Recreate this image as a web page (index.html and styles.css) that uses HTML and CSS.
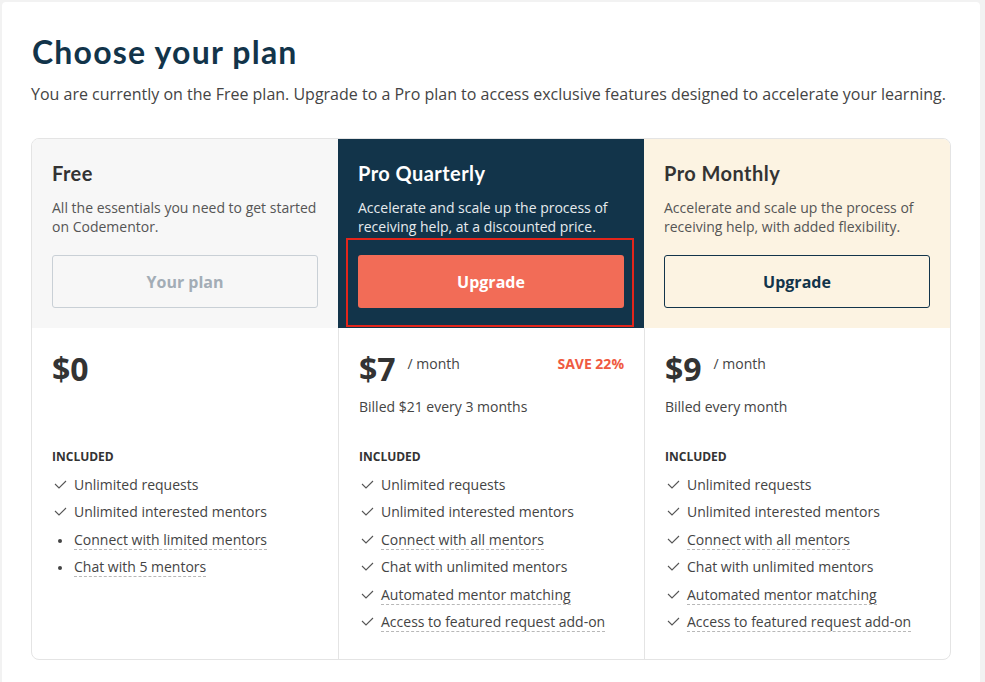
FILE: index.html
```html
<!DOCTYPE html>
<html lang="en">
<head>
    <meta charset="UTF-8">
    <meta name="viewport" content="width=device-width, initial-scale=1.0">
    <title>Choose your plan</title>
    <link rel="stylesheet" href="styles.css">
</head>
<body>
    <div class="panel">
        <h1>Choose your plan</h1>
        <p class="lead">You are currently on the Free plan. Upgrade to a Pro plan to access exclusive features designed to accelerate your learning.</p>

        <div class="plans">
            <!-- Free -->
            <div class="plan plan-free">
                <div class="plan-head">
                    <h2>Free</h2>
                    <p class="plan-desc">All the essentials you need to get started on Codementor.</p>
                    <a class="btn btn-current">Your plan</a>
                </div>
                <div class="plan-body">
                    <div class="price-row">
                        <span class="price">$0</span>
                    </div>
                    <p class="billed"></p>
                    <h4>Included</h4>
                    <ul class="features">
                        <li><svg class="ico" viewBox="0 0 16 20"><polyline points="3,9 7,13 14,6"/></svg>Unlimited requests</li>
                        <li><svg class="ico" viewBox="0 0 16 20"><polyline points="3,9 7,13 14,6"/></svg>Unlimited interested mentors</li>
                        <li><span class="ico ico-dot"></span><span class="dashed">Connect with limited mentors</span></li>
                        <li><span class="ico ico-dot"></span><span class="dashed">Chat with 5 mentors</span></li>
                    </ul>
                </div>
            </div>

            <!-- Pro Quarterly -->
            <div class="plan plan-quarterly">
                <div class="plan-head">
                    <h2>Pro Quarterly</h2>
                    <p class="plan-desc">Accelerate and scale up the process of receiving help, at a discounted price.</p>
                    <div class="highlight">
                        <a class="btn btn-primary">Upgrade</a>
                    </div>
                </div>
                <div class="plan-body">
                    <div class="price-row">
                        <span class="price">$7</span>
                        <span class="per">/ month</span>
                        <span class="save">SAVE 22%</span>
                    </div>
                    <p class="billed">Billed $21 every 3 months</p>
                    <h4>Included</h4>
                    <ul class="features">
                        <li><svg class="ico" viewBox="0 0 16 20"><polyline points="3,9 7,13 14,6"/></svg>Unlimited requests</li>
                        <li><svg class="ico" viewBox="0 0 16 20"><polyline points="3,9 7,13 14,6"/></svg>Unlimited interested mentors</li>
                        <li><svg class="ico" viewBox="0 0 16 20"><polyline points="3,9 7,13 14,6"/></svg><span class="dashed">Connect with all mentors</span></li>
                        <li><svg class="ico" viewBox="0 0 16 20"><polyline points="3,9 7,13 14,6"/></svg>Chat with unlimited mentors</li>
                        <li><svg class="ico" viewBox="0 0 16 20"><polyline points="3,9 7,13 14,6"/></svg><span class="dashed">Automated mentor matching</span></li>
                        <li><svg class="ico" viewBox="0 0 16 20"><polyline points="3,9 7,13 14,6"/></svg><span class="dashed">Access to featured request add-on</span></li>
                    </ul>
                </div>
            </div>

            <!-- Pro Monthly -->
            <div class="plan plan-monthly">
                <div class="plan-head">
                    <h2>Pro Monthly</h2>
                    <p class="plan-desc">Accelerate and scale up the process of receiving help, with added flexibility.</p>
                    <a class="btn btn-outline">Upgrade</a>
                </div>
                <div class="plan-body">
                    <div class="price-row">
                        <span class="price">$9</span>
                        <span class="per">/ month</span>
                    </div>
                    <p class="billed">Billed every month</p>
                    <h4>Included</h4>
                    <ul class="features">
                        <li><svg class="ico" viewBox="0 0 16 20"><polyline points="3,9 7,13 14,6"/></svg>Unlimited requests</li>
                        <li><svg class="ico" viewBox="0 0 16 20"><polyline points="3,9 7,13 14,6"/></svg>Unlimited interested mentors</li>
                        <li><svg class="ico" viewBox="0 0 16 20"><polyline points="3,9 7,13 14,6"/></svg><span class="dashed">Connect with all mentors</span></li>
                        <li><svg class="ico" viewBox="0 0 16 20"><polyline points="3,9 7,13 14,6"/></svg>Chat with unlimited mentors</li>
                        <li><svg class="ico" viewBox="0 0 16 20"><polyline points="3,9 7,13 14,6"/></svg><span class="dashed">Automated mentor matching</span></li>
                        <li><svg class="ico" viewBox="0 0 16 20"><polyline points="3,9 7,13 14,6"/></svg><span class="dashed">Access to featured request add-on</span></li>
                    </ul>
                </div>
            </div>
        </div>
    </div>
</body>
</html>
```

FILE: styles.css
```css
* {
    margin: 0;
    padding: 0;
    box-sizing: border-box;
}

body {
    font-family: 'Open Sans', 'Liberation Sans', sans-serif;
    background: #f2f2f2;
    color: #444;
    min-height: 100vh;
}

.panel {
    background: #fff;
    margin: 2px 5px 0 2px;
    padding: 31px 29px 40px 29px;
    border-radius: 4px 4px 0 0;
    min-height: calc(100vh - 2px);
}

.panel h1 {
    font-family: 'Lato', 'Open Sans', sans-serif;
    font-size: 32px;
    line-height: 38px;
    font-weight: 700;
    letter-spacing: 1.2px;
    color: #12344a;
    padding-left: 1px;
}

.lead {
    margin-top: 11px;
    font-size: 16px;
    line-height: 24px;
    color: #444;
}

/* Plans grid */
.plans {
    margin-top: 32px;
    display: grid;
    grid-template-columns: repeat(3, 1fr);
    border: 1px solid #e4e4e4;
    border-radius: 8px;
    overflow: hidden;
}

.plan {
    display: flex;
    flex-direction: column;
}

.plan-head {
    padding: 22px 20px 20px;
}

.plan-head h2 {
    font-family: 'Lato', 'Open Sans', sans-serif;
    font-size: 20px;
    line-height: 24px;
    font-weight: 700;
    letter-spacing: 0.45px;
    color: #333;
}

.plan-desc {
    margin-top: 13px;
    font-size: 14px;
    line-height: 19px;
    color: #555;
}

.btn {
    display: flex;
    justify-content: center;
    align-items: center;
    height: 53px;
    margin-top: 19px;
    border-radius: 3px;
    font-size: 16px;
    font-weight: 700;
    text-decoration: none;
    cursor: pointer;
}

.btn-current {
    border: 1px solid #c9d0d6;
    color: #a3adb6;
    background: transparent;
}

.btn-primary {
    background: #f26c57;
    color: #fff;
    margin-top: 0;
}

.btn-outline {
    border: 1px solid #12344a;
    color: #12344a;
    background: transparent;
}

.highlight {
    margin: 2px -10px -19px -12px;
    padding: 15px 8px 17px 10px;
    border: 2px solid #e3251b;
}

.plan-free .plan-head {
    background: #f7f7f7;
}

.plan-quarterly .plan-head {
    background: #12344a;
}

.plan-quarterly .plan-head h2 {
    color: #fff;
}

.plan-quarterly .plan-desc {
    color: #e6ebee;
}

.plan-monthly .plan-head {
    background: #fcf3e2;
}

/* Body */
.plan-body {
    flex: 1;
    padding: 21px 20px 27px;
}

.plan + .plan .plan-body {
    border-left: 1px solid #e4e4e4;
}

.price-row {
    display: flex;
    align-items: flex-start;
    height: 40px;
}

.price {
    font-size: 32px;
    line-height: 40px;
    font-weight: 700;
    color: #333;
}

.per {
    margin: 5px 0 0 12px;
    font-size: 14px;
    line-height: 20px;
    color: #444;
}

.save {
    margin: 5px 0 0 auto;
    font-size: 14px;
    line-height: 20px;
    font-weight: 700;
    color: #ef5a41;
}

.billed {
    margin-top: 8px;
    height: 20px;
    font-size: 14px;
    line-height: 20px;
    color: #444;
}

.plan-body h4 {
    margin-top: 32px;
    font-size: 12px;
    line-height: 16px;
    font-weight: 700;
    text-transform: uppercase;
    color: #333;
}

.features {
    list-style: none;
    margin-top: 10px;
    display: flex;
    flex-direction: column;
    gap: 7.4px;
}

.features li {
    display: flex;
    align-items: center;
    font-size: 14px;
    line-height: 20px;
    color: #444;
}

.ico {
    flex: none;
    width: 16px;
    height: 20px;
    margin-right: 6px;
    position: relative;
}

/* thin chevron check */
svg.ico polyline {
    fill: none;
    stroke: #555;
    stroke-width: 1.1;
}

.ico-dot::before {
    content: '';
    position: absolute;
    left: 6px;
    top: 9px;
    width: 4px;
    height: 4px;
    border-radius: 50%;
    background: #444;
}

.dashed {
    border-bottom: 1px dashed #b8b8b8;
    line-height: 19px;
}
```
